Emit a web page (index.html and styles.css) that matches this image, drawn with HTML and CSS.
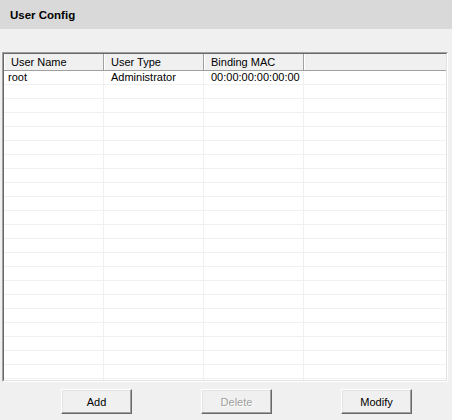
FILE: index.html
```html
<!DOCTYPE html>
<html>
<head>
<meta charset="utf-8">
<link rel="stylesheet" href="styles.css">
</head>
<body>
<div class="titlebar">User Config</div>
<div class="content">
  <div class="listview">
    <div class="list-inner">
      <div class="hrow">
        <div class="hcell c1">User Name</div>
        <div class="hcell c2">User Type</div>
        <div class="hcell c3">Binding MAC</div>
        <div class="hcell c4"></div>
      </div>
      <div class="rows">
        <div class="row"><div class="cell c1 first">root</div><div class="cell c2">Administrator</div><div class="cell c3">00:00:00:00:00:00</div><div class="cell c4"></div></div>
        <div class="row"><div class="cell c1"></div><div class="cell c2"></div><div class="cell c3"></div><div class="cell c4"></div></div>
        <div class="row"><div class="cell c1"></div><div class="cell c2"></div><div class="cell c3"></div><div class="cell c4"></div></div>
        <div class="row"><div class="cell c1"></div><div class="cell c2"></div><div class="cell c3"></div><div class="cell c4"></div></div>
        <div class="row"><div class="cell c1"></div><div class="cell c2"></div><div class="cell c3"></div><div class="cell c4"></div></div>
        <div class="row"><div class="cell c1"></div><div class="cell c2"></div><div class="cell c3"></div><div class="cell c4"></div></div>
        <div class="row"><div class="cell c1"></div><div class="cell c2"></div><div class="cell c3"></div><div class="cell c4"></div></div>
        <div class="row"><div class="cell c1"></div><div class="cell c2"></div><div class="cell c3"></div><div class="cell c4"></div></div>
        <div class="row"><div class="cell c1"></div><div class="cell c2"></div><div class="cell c3"></div><div class="cell c4"></div></div>
        <div class="row"><div class="cell c1"></div><div class="cell c2"></div><div class="cell c3"></div><div class="cell c4"></div></div>
        <div class="row"><div class="cell c1"></div><div class="cell c2"></div><div class="cell c3"></div><div class="cell c4"></div></div>
        <div class="row"><div class="cell c1"></div><div class="cell c2"></div><div class="cell c3"></div><div class="cell c4"></div></div>
        <div class="row"><div class="cell c1"></div><div class="cell c2"></div><div class="cell c3"></div><div class="cell c4"></div></div>
        <div class="row"><div class="cell c1"></div><div class="cell c2"></div><div class="cell c3"></div><div class="cell c4"></div></div>
        <div class="row"><div class="cell c1"></div><div class="cell c2"></div><div class="cell c3"></div><div class="cell c4"></div></div>
        <div class="row"><div class="cell c1"></div><div class="cell c2"></div><div class="cell c3"></div><div class="cell c4"></div></div>
        <div class="row"><div class="cell c1"></div><div class="cell c2"></div><div class="cell c3"></div><div class="cell c4"></div></div>
        <div class="row"><div class="cell c1"></div><div class="cell c2"></div><div class="cell c3"></div><div class="cell c4"></div></div>
        <div class="row"><div class="cell c1"></div><div class="cell c2"></div><div class="cell c3"></div><div class="cell c4"></div></div>
        <div class="row"><div class="cell c1"></div><div class="cell c2"></div><div class="cell c3"></div><div class="cell c4"></div></div>
        <div class="row"><div class="cell c1"></div><div class="cell c2"></div><div class="cell c3"></div><div class="cell c4"></div></div>
        <div class="row"><div class="cell c1"></div><div class="cell c2"></div><div class="cell c3"></div><div class="cell c4"></div></div>
        <div class="row"><div class="cell c1"></div><div class="cell c2"></div><div class="cell c3"></div><div class="cell c4"></div></div>
      </div>
    </div>
  </div>
  <div class="btn-row">
    <button class="btn">Add</button>
    <button class="btn disabled">Delete</button>
    <button class="btn">Modify</button>
  </div>
</div>
</body>
</html>
```

FILE: styles.css
```css
html, body {
  margin: 0;
  padding: 0;
  background: #f0f0f0;
  font-family: "Liberation Sans", Arial, sans-serif;
  font-size: 11px;
  color: #000;
}

.titlebar {
  height: 29px;
  line-height: 31px;
  background: #d9d9d9;
  padding-left: 10px;
  font-weight: bold;
  font-size: 11.5px;
}

.content {
  padding: 23px 4px 0 2px;
}

.listview {
  width: 444px;
  height: 328px;
  border: 1px solid;
  border-color: #a0a0a0 #ffffff #ffffff #a0a0a0;
}

.list-inner {
  height: 326px;
  border: 1px solid;
  border-color: #696969 #e3e3e3 #e3e3e3 #696969;
  background: #fff;
  overflow: hidden;
}

.hrow {
  display: flex;
  height: 16px;
  background: #f0f0f0;
  border-bottom: 1px solid #a0a0a0;
}

.hcell {
  box-sizing: border-box;
  height: 16px;
  line-height: 16px;
  padding-left: 6px;
  border-left: 1px solid #fff;
  border-right: 1px solid #a0a0a0;
  white-space: nowrap;
}

.c1, .c2, .c3 { width: 100px; flex: none; }
.c4 { flex: 1; }
.hcell.c4 { border-right: none; }

.row {
  display: flex;
  height: 13px;
  border-bottom: 1px solid #f0f0f0;
}

.cell {
  box-sizing: border-box;
  height: 13px;
  line-height: 13px;
  padding-left: 7px;
  border-right: 1px solid #f0f0f0;
  white-space: nowrap;
}

.cell.first { padding-left: 4px; }
.cell.c4 { border-right: none; }

.btn-row {
  display: flex;
  gap: 69px;
  padding: 7px 0 0 59px;
}

.btn {
  box-sizing: border-box;
  width: 71px;
  height: 25px;
  margin: 0;
  padding: 0;
  background: #f0f0f0;
  font-family: "Liberation Sans", Arial, sans-serif;
  font-size: 11px;
  color: #000;
  border: 1px solid;
  border-color: #ffffff #696969 #696969 #ffffff;
  box-shadow: inset -1px -1px 0 #a0a0a0, inset 1px 1px 0 #e3e3e3;
}

.btn.disabled {
  color: #a0a0a0;
  text-shadow: 1px 1px 0 #ffffff;
}
```
